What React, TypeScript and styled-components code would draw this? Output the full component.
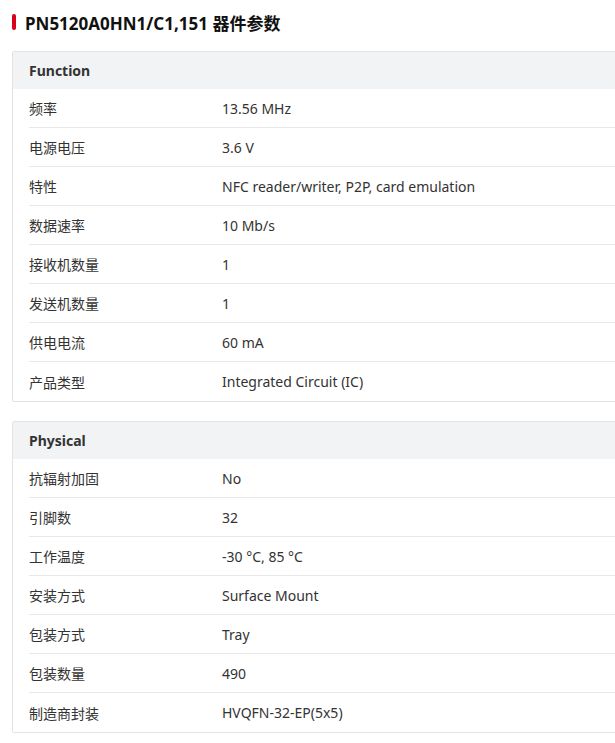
import React from "react";
import styled, { createGlobalStyle } from "styled-components";

const G = createGlobalStyle`
  body { margin: 0; background: #fff; font-family: "Noto Sans", "Noto Sans CJK SC", sans-serif; color: #333; overflow: hidden; }
`;
const Page = styled.div`padding: 9px 0 0 12px; width: 640px;`;
const Title = styled.h2`
  display: flex; align-items: center; gap: 9px; margin: 0 0 16px;
  font-size: 17px; font-weight: 700; color: #111; height: 26px;
  &::before { content: ""; width: 4px; height: 16px; background: #d9001b; border-radius: 2px; }
`;
const Card = styled.div`border: 1px solid #e3e3e3; border-radius: 2px; margin-bottom: 19px;`;
const Header = styled.div`
  height: 37px; background: #f2f3f5; display: flex; align-items: center;
  padding-left: 16px; font-size: 14px; font-weight: 700; color: #333;
`;
const Row = styled.div<{ last?: boolean }>`
  margin-left: 16px; height: 39px; display: grid; grid-template-columns: 193px 1fr;
  align-items: center; font-size: 14px; color: #333;
  border-bottom: ${p => (p.last ? "none" : "1px solid #e8e8e8")};
  box-sizing: border-box;
`;

const sections: [string, [string, string][]][] = [
  ["Function", [
    ["频率", "13.56 MHz"], ["电源电压", "3.6 V"], ["特性", "NFC reader/writer, P2P, card emulation"],
    ["数据速率", "10 Mb/s"], ["接收机数量", "1"], ["发送机数量", "1"], ["供电电流", "60 mA"],
    ["产品类型", "Integrated Circuit (IC)"],
  ]],
  ["Physical", [
    ["抗辐射加固", "No"], ["引脚数", "32"], ["工作温度", "-30 °C, 85 °C"], ["安装方式", "Surface Mount"],
    ["包装方式", "Tray"], ["包装数量", "490"], ["制造商封装", "HVQFN-32-EP(5x5)"],
  ]],
];

export default function App() {
  return (
    <Page>
      <G />
      <Title>PN5120A0HN1/C1,151 器件参数</Title>
      {sections.map(([h, rows]) => (
        <Card key={h}>
          <Header>{h}</Header>
          {rows.map(([k, v], i) => (
            <Row key={k} last={i === rows.length - 1}><span>{k}</span><span>{v}</span></Row>
          ))}
        </Card>
      ))}
    </Page>
  );
}
